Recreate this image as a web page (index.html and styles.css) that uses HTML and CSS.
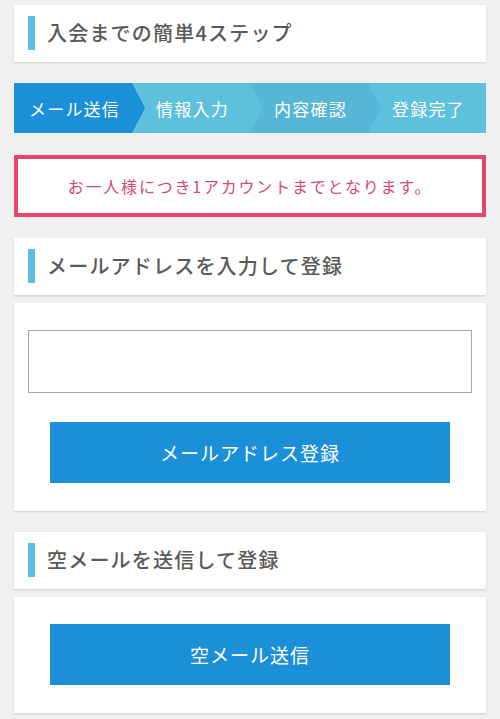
FILE: index.html
```html
<!DOCTYPE html>
<html lang="ja">
  <head>
    <meta charset="UTF-8" />
    <meta name="viewport" content="width=device-width, initial-scale=1.0" />
    <title>会員登録</title>
    <link rel="stylesheet" href="styles.css">
  </head>
  <body>
    <div class="page">
      <div class="sectionHead">
        <h2>入会までの簡単4ステップ</h2>
      </div>

      <ol class="steps">
        <li class="step active">メール送信</li>
        <li class="step">情報入力</li>
        <li class="step dark">内容確認</li>
        <li class="step">登録完了</li>
      </ol>

      <div class="notice">お一人様につき1アカウントまでとなります。</div>

      <div class="sectionHead">
        <h2>メールアドレスを入力して登録</h2>
      </div>
      <div class="card">
        <input type="email" class="mailInput" />
        <button class="mainBtn">メールアドレス登録</button>
      </div>

      <div class="sectionHead">
        <h2>空メールを送信して登録</h2>
      </div>
      <div class="card">
        <button class="mainBtn">空メール送信</button>
      </div>
    </div>
  </body>
</html>
```

FILE: styles.css
```css
* {
  margin: 0;
  padding: 0;
  box-sizing: border-box;
  font-family: "Noto Sans CJK JP", "Noto Sans", sans-serif;
}
body {
  background-color: #f0f0f0;
}
.page {
  padding: 5px 14px 20px;
  display: flex;
  flex-direction: column;
}
.sectionHead {
  background-color: #fff;
  padding: 11px 14px 12px;
  box-shadow: 0 1px 2px rgba(0, 0, 0, 0.15);
}
.sectionHead h2 {
  border-left: 7px solid #5bc0dc;
  padding-left: 12px;
  height: 34px;
  line-height: 34px;
  font-size: 20px;
  font-weight: 500;
  letter-spacing: 1.2px;
  color: #595959;
}
.steps {
  list-style: none;
  display: flex;
  height: 50px;
  margin: 21px 0 22px;
}
.step {
  position: relative;
  flex: 1;
  display: flex;
  align-items: center;
  justify-content: center;
  padding-left: 3px;
  background-color: #5dc0dd;
  color: #fff;
  font-size: 17px;
  letter-spacing: 1.2px;
  font-weight: 400;
}
.step::after {
  content: "";
  position: absolute;
  top: 0;
  right: -13px;
  width: 13px;
  height: 50px;
  background-color: inherit;
  clip-path: polygon(0 0, 100% 50%, 0 100%);
  z-index: 1;
}
.step:last-child::after {
  display: none;
}
.step.active {
  background-color: #1b8fd8;
}
.step.dark {
  background-color: #55b7d5;
}
.notice {
  background-color: #fff;
  border: 4px solid #e9456b;
  height: 62px;
  display: flex;
  align-items: center;
  justify-content: center;
  color: #d9496f;
  font-size: 16px;
  letter-spacing: 1.8px;
  margin-bottom: 21px;
}
.card {
  background-color: #fff;
  margin: 8px 0 21px;
  padding: 27px 14px 28px;
  display: flex;
  flex-direction: column;
  align-items: center;
  box-shadow: 0 1px 2px rgba(0, 0, 0, 0.15);
}
.mailInput {
  width: 100%;
  height: 63px;
  border: 1px solid #a9a9a9;
  outline: none;
  margin-bottom: 29px;
  font-size: 18px;
  padding: 0 10px;
}
.mainBtn {
  width: 400px;
  height: 61px;
  border: none;
  background-color: #1b8fd8;
  color: #fff;
  font-size: 19px;
  letter-spacing: 1px;
  cursor: pointer;
}
```
